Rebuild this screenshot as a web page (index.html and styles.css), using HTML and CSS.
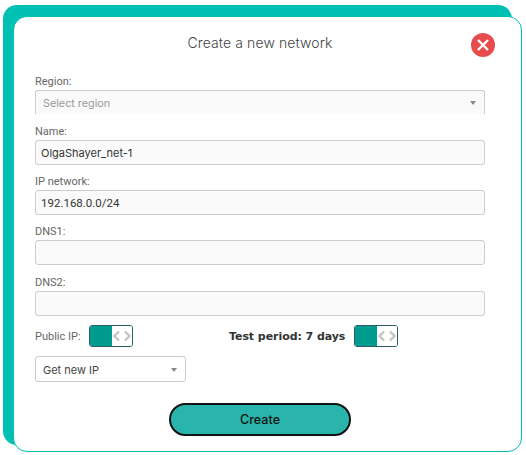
FILE: index.html
```html
<!DOCTYPE html>
<html lang="en">
<head>
  <meta charset="UTF-8">
  <title>Create a new network</title>
  <link rel="stylesheet" href="styles.css">
</head>
<body>
  <div class="backdrop">
    <div class="modal">
      <div class="modal-head">
        <h2>Create a new network</h2>
        <button class="btn-close" aria-label="Close">
          <svg width="24" height="24" viewBox="0 0 24 24">
            <circle cx="12" cy="12" r="12" fill="#e64c4c"/>
            <path d="M7 7l10 10M17 7L7 17" stroke="#fff" stroke-width="2.4" fill="none"/>
          </svg>
        </button>
      </div>

      <div class="field field-region">
        <label>Region:</label>
        <div class="select select-region">
          <span>Select region</span>
          <i class="caret"></i>
        </div>
      </div>

      <div class="field">
        <label for="name">Name:</label>
        <input id="name" type="text" value="OlgaShayer_net-1">
      </div>

      <div class="field">
        <label for="ipNetwork">IP network:</label>
        <input id="ipNetwork" class="input-ip" type="text" value="192.168.0.0/24">
      </div>

      <div class="field field-region">
        <label for="dns1">DNS1:</label>
        <input id="dns1" type="text">
      </div>

      <div class="field field-region">
        <label for="dns2">DNS2:</label>
        <input id="dns2" type="text">
      </div>

      <div class="toggle-row">
        <div class="toggle-group toggle-public">
          <span class="toggle-label">Public IP:</span>
          <div class="toggle">
            <span class="toggle-on"></span>
            <span class="toggle-off">
              <svg width="20" height="12" viewBox="0 0 20 12">
                <path d="M7 1.500L2.500 6 7 10.500M13 1.500L17.500 6 13 10.500" stroke="#c4c4c4" stroke-width="2.400" fill="none"/>
              </svg>
            </span>
          </div>
        </div>
        <div class="toggle-group">
          <span class="toggle-label-bold">Test period: 7 days</span>
          <div class="toggle">
            <span class="toggle-on"></span>
            <span class="toggle-off">
              <svg width="20" height="12" viewBox="0 0 20 12">
                <path d="M7 1.500L2.500 6 7 10.500M13 1.500L17.500 6 13 10.500" stroke="#c4c4c4" stroke-width="2.400" fill="none"/>
              </svg>
            </span>
          </div>
        </div>
      </div>

      <div class="select select-ip">
        <span>Get new IP</span>
        <i class="caret"></i>
      </div>

      <div class="actions">
        <button class="btn-create">Create</button>
      </div>
    </div>
  </div>
</body>
</html>
```

FILE: styles.css
```css
html, body {
  margin: 0;
  height: 455px;
  overflow: hidden;
  background: #fff;
}

body {
  font-family: 'Inter', sans-serif;
}

.backdrop {
  width: 509px;
  height: 440px;
  margin: 5px 0 0 3px;
  padding: 11px 0 0 10px;
  box-sizing: border-box;
  background: #00bfb3;
  border-radius: 14px;
}

.modal {
  width: 509px;
  height: 436px;
  padding: 0 36px 0 21px;
  box-sizing: border-box;
  background: #fff;
  border: 1px solid #00bfb3;
  border-radius: 14px;
}

.modal-head {
  display: flex;
  justify-content: center;
  align-items: center;
  height: 50px;
  margin-bottom: 6px;
  position: relative;
}

h2 {
  margin: 0;
  font-size: 14px;
  font-weight: 300;
  letter-spacing: 0.1px;
  color: #444;
}

.btn-close {
  position: absolute;
  right: -10px;
  top: 16px;
  width: 24px;
  height: 24px;
  padding: 0;
  border: none;
  background: none;
}

.field {
  margin-bottom: 8px;
}

.field-region {
  margin-bottom: 9px;
}

label, .toggle-label {
  display: block;
  height: 17px;
  font-family: 'Roboto', sans-serif;
  font-size: 11px;
  line-height: 17px;
  color: #666;
}

input {
  display: block;
  width: 100%;
  height: 25px;
  padding: 0 5px;
  box-sizing: border-box;
  font-family: 'Inter', sans-serif;
  font-size: 11px;
  color: #333;
  background: #fafafa;
  border: 1px solid #ccc;
  border-radius: 3px;
}

.input-ip {
  font-family: 'Roboto', sans-serif;
  font-size: 11.5px;
}

.select {
  display: flex;
  justify-content: space-between;
  align-items: center;
  box-sizing: border-box;
  padding: 1px 8px 0 7px;
  font-family: 'Inter', sans-serif;
  font-size: 11px;
  border: 1px solid #ccc;
  border-radius: 3px;
  background: #fafafa;
}

.select-region {
  height: 24px;
  font-size: 10.8px;
  color: #999;
  border-bottom: none;
  border-radius: 3px 3px 0 0;
}

.select-ip {
  width: 151px;
  height: 26px;
  color: #444;
  background: #fff;
  margin-top: 9px;
}

.caret {
  width: 0;
  height: 0;
  border-left: 3px solid transparent;
  border-right: 3px solid transparent;
  border-top: 4px solid #888;
}

.toggle-row {
  display: flex;
  height: 22px;
}

.toggle-group {
  display: flex;
  align-items: center;
}

.toggle-public {
  width: 194px;
}

.toggle-label {
  margin-right: 8px;
}

.toggle-label-bold {
  margin-right: 9px;
  font-family: 'DejaVu Sans', sans-serif;
  font-size: 11px;
  font-weight: 700;
  letter-spacing: -0.06px;
  color: #333;
}

.toggle {
  display: flex;
  width: 44px;
  height: 22px;
  box-sizing: border-box;
  border: 1px solid #2b5f66;
  border-radius: 3px;
  overflow: hidden;
}

.toggle-on {
  width: 22px;
  background: #009b8f;
}

.toggle-off {
  flex: 1;
  display: flex;
  align-items: center;
  justify-content: center;
  background: #fff;
}

.actions {
  display: flex;
  justify-content: center;
  margin-top: 21px;
}

.btn-create {
  width: 182px;
  height: 33px;
  font-family: 'Inter', sans-serif;
  font-size: 12.6px;
  font-weight: 500;
  color: #111;
  background: #29b5ab;
  border: 2px solid #111;
  border-radius: 17px;
}
```
